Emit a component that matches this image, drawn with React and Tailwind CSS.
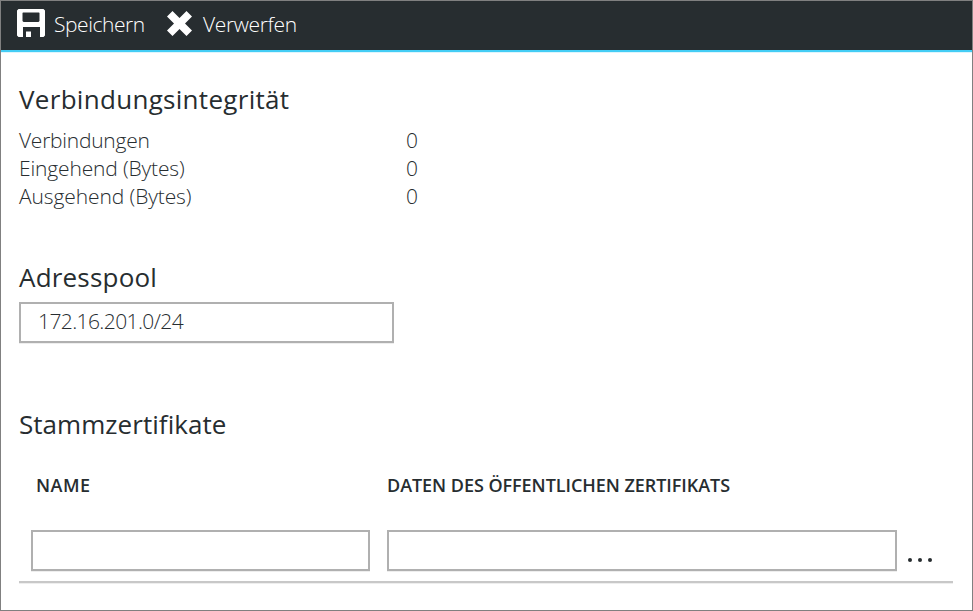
function SaveIcon() {
  return (
    <svg className="h-7 w-7 shrink-0" viewBox="0 0 28 28" fill="#fff" fillRule="evenodd">
      <path d="M1.500 0H26.500L28 1.500V26.500L26.500 28H23V18H6V28H1.500L0 26.500V1.500ZM6 3.500L5.500 4V12L6.500 13H21.500L22.500 12V4L22 3.500Z" />
      <path d="M9 22.500H14V28H9Z" />
    </svg>
  );
}

function DiscardIcon() {
  return (
    <svg className="h-[26px] w-[26px] shrink-0" viewBox="0 0 26 26" fill="#fff">
      <path d="M5.500 1L12.500 8L19.500 1L25 6.500L18 13.500L25 20.500L19.500 26L12.500 19L5.500 26L0 20.500L7 13.500L0 6.500Z" />
    </svg>
  );
}

const stats = [
  ["Verbindungen", "0", "tracking-[-0.25px]"],
  ["Eingehend (Bytes)", "0", "tracking-[-0.15px]"],
  ["Ausgehend (Bytes)", "0", "tracking-[-0.1px]"],
];

export default function App() {
  return (
    <div className="flex h-[611px] w-[973px] flex-col overflow-hidden border border-[#808080] bg-white font-['Open_Sans',sans-serif] text-[#272d30]">
      <header className="flex h-[51px] shrink-0 items-start border-b-2 border-[#44cdf5] bg-[#272d30] pl-4 text-[21px] leading-7 font-[350] text-white shadow-[0_1px_0_#dff5fc]">
        <div className="flex pt-2">
          <SaveIcon />
          <span className="mt-px ml-[9px] w-[113px] tracking-[-0.45px]">Speichern</span>
        </div>
        <div className="flex pt-[9px]">
          <DiscardIcon />
          <span className="ml-[10px] tracking-[-0.35px]">Verwerfen</span>
        </div>
      </header>

      <main className="flex flex-col pt-[29px] pr-[19px] pl-[18px]">
        <h2 className="text-[26px] leading-9 tracking-[0.3px]">Verbindungsintegrität</h2>
        <dl className="mt-[9px] text-[21px] leading-7 font-[350]">
          {stats.map(([label, value, tracking]) => (
            <div key={label} className="flex">
              <dt className={`w-[387px] ${tracking}`}>{label}</dt>
              <dd>{value}</dd>
            </div>
          ))}
        </dl>

        <h2 className="mt-[49px] text-[26px] leading-9 tracking-[0.2px]">Adresspool</h2>
        <input
          className="mt-[7px] h-[41px] w-[375px] border-2 border-[#b0b0b0] px-[17px] pb-[3px] text-[21px] font-[350] tracking-[-0.6px] shadow-[0_1px_0_#eeeeee] outline-none"
          defaultValue="172.16.201.0/24"
        />

        <h2 className="mt-[63px] text-[26px] leading-9 tracking-[0.05px]">Stammzertifikate</h2>
        <div className="mt-[31px] flex pl-[17px] text-[18px] leading-6 font-semibold">
          <div className="w-[351px] tracking-[0.5px]">NAME</div>
          <div className="tracking-[-0.05px]">DATEN DES ÖFFENTLICHEN ZERTIFIKATS</div>
        </div>
        <div className="mt-[33px] flex h-[53px] items-start border-b-2 border-[#c8c8c8] pl-3 shadow-[0_1px_0_#eeeeee]">
          <input className="h-[41px] w-[339px] border-2 border-[#b0b0b0] px-4 shadow-[0_1px_0_#eeeeee] outline-none" />
          <input className="ml-[17px] h-[41px] w-[510px] border-2 border-[#b0b0b0] px-4 shadow-[0_1px_0_#eeeeee] outline-none" />
          <div className="mt-[27.5px] ml-[10.5px] flex gap-[5.5px]">
            <span className="h-[4.5px] w-[4.5px] rounded-full bg-[#272d30]" />
            <span className="h-[4.5px] w-[4.5px] rounded-full bg-[#272d30]" />
            <span className="h-[4.5px] w-[4.5px] rounded-full bg-[#272d30]" />
          </div>
        </div>
      </main>
    </div>
  );
}
